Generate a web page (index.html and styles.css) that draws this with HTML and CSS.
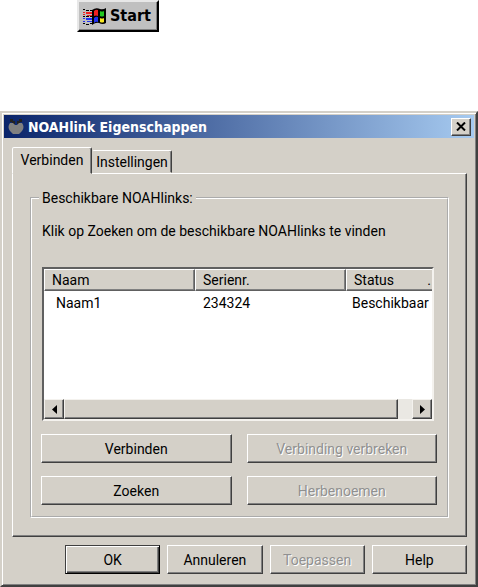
FILE: index.html
```html
<!DOCTYPE html>
<html lang="nl">
<head>
    <meta charset="UTF-8">
    <meta name="viewport" content="width=device-width, initial-scale=1.0">
    <title>NOAHlink Eigenschappen</title>
    <link rel="stylesheet" href="styles.css">
</head>
<body>
    <div class="taskbar">
        <button type="button" class="start-btn">
            <svg class="start-logo" width="25" height="19" viewBox="0 0 25 19" aria-hidden="true">
                <path fill="#000" d="M10 3Q14 0 18 2Q21 3 24 1V16Q21 18 17 16Q14 15 10 18Z"/>
                <path fill="#f02020" d="M12 4Q14 2 16 3V9Q14 8 12 9Z"/>
                <path fill="#20c820" d="M18 4Q20 5 22 4V9Q20 10 18 9Z"/>
                <path fill="#2030f0" d="M12 11Q14 9 16 10V15Q14 14 12 16Z"/>
                <path fill="#f8e820" d="M18 11Q20 12 22 11V15Q20 16 18 15Z"/>
                <path fill="#000" d="M1 2h2v1H1zM4 3h3v1H4zM8 3h2v1H8zM1 9h2v1H1zM4 9h3v1H4zM8 9h2v1H8zM1 16h2v1H1zM4 17h3v1H4zM8 16h2v1H8z"/>
                <path fill="#f02020" d="M1 5h2v1H1zM4 5h6v2H4zM1 7h2v1H1zM5 8h5v1H5z"/>
                <path fill="#2030f0" d="M1 11h2v1H1zM4 11h6v2H4zM1 14h2v1H1zM5 14h5v1H5z"/>
            </svg>
            Start
        </button>
    </div>

    <main class="dialog">
        <header class="title-bar">
            <svg class="title-icon" width="16" height="18" viewBox="0 0 16 18" aria-hidden="true">
                <path fill="#222" d="M2 1h3v2h2v3H4V4H2zM14 1h-3v2H9v3h3V4h2z"/>
                <path fill="#808080" d="M2 5H5L7 7H9L11 5H14Q17 9 14 13L11 16H5L2 13Q-1 9 2 5Z"/>
            </svg>
            <h1>NOAHlink Eigenschappen</h1>
            <button type="button" class="close-btn" aria-label="Sluiten">
                <svg width="10" height="9" viewBox="0 0 10 9" aria-hidden="true">
                    <path d="M1 0.5L9 8.5M9 0.5L1 8.5" stroke="#000" stroke-width="2"/>
                </svg>
            </button>
        </header>

        <div class="dialog-body">
            <div class="tabs" role="tablist">
                <button type="button" class="tab active" role="tab" aria-selected="true">Verbinden</button>
                <button type="button" class="tab" role="tab" aria-selected="false">Instellingen</button>
            </div>

            <div class="panel" role="tabpanel">
                <fieldset class="group">
                    <legend>Beschikbare NOAHlinks:</legend>
                    <p class="hint">Klik op Zoeken om de beschikbare NOAHlinks te vinden</p>

                    <div class="list">
                        <table>
                            <thead>
                                <tr>
                                    <th>Naam</th>
                                    <th>Serienr.</th>
                                    <th class="status"><span>Status</span><span>.</span></th>
                                </tr>
                            </thead>
                            <tbody>
                                <tr>
                                    <td class="name">Naam1</td>
                                    <td>234324</td>
                                    <td>Beschikbaar</td>
                                </tr>
                            </tbody>
                        </table>
                        <div class="scrollbar">
                            <button type="button" class="scroll-btn" aria-label="Naar links">
                                <svg width="5" height="9" viewBox="0 0 5 9" aria-hidden="true"><path d="M5 0V9L0 4.5Z"/></svg>
                            </button>
                            <div class="scroll-thumb"></div>
                            <div class="scroll-track"></div>
                            <button type="button" class="scroll-btn" aria-label="Naar rechts">
                                <svg width="5" height="9" viewBox="0 0 5 9" aria-hidden="true"><path d="M0 0V9L5 4.5Z"/></svg>
                            </button>
                        </div>
                    </div>

                    <div class="actions">
                        <button type="button" class="btn">Verbinden</button>
                        <button type="button" class="btn" disabled>Verbinding verbreken</button>
                        <button type="button" class="btn">Zoeken</button>
                        <button type="button" class="btn" disabled>Herbenoemen</button>
                    </div>
                </fieldset>
            </div>

            <footer class="dialog-buttons">
                <button type="button" class="btn default">OK</button>
                <button type="button" class="btn">Annuleren</button>
                <button type="button" class="btn" disabled>Toepassen</button>
                <button type="button" class="btn">Help</button>
            </footer>
        </div>
    </main>
</body>
</html>
```
FILE: styles.css
```css
* {
    box-sizing: border-box;
}
body {
    margin: 0;
    background-color: #fff;
    font-family: Roboto, "Liberation Sans", Arial, sans-serif;
    font-size: 14px;
    line-height: 16px;
    color: #000;
}
button {
    margin: 0;
    padding: 0;
    font: inherit;
    color: inherit;
    background-color: #d4d0c8;
    border: none;
}
svg {
    flex-shrink: 0;
}

/* Start button */
.taskbar {
    height: 111px;
    padding-left: 77px;
}
.start-btn {
    display: flex;
    align-items: center;
    gap: 3px;
    width: 82px;
    height: 32px;
    padding-left: 3px;
    font-family: "DejaVu Sans Condensed", "DejaVu Sans", sans-serif;
    font-size: 16px;
    font-weight: bold;
    background-color: #c0c0c0;
    border: 2px solid;
    border-color: #e8e8e8 #000 #000 #e8e8e8;
    box-shadow: inset -1px -1px #808080;
}

/* Dialog window */
.dialog {
    padding: 2px;
    background-color: #d4d0c8;
    border: 2px solid;
    border-color: #d4d0c8 #404040 #404040 #d4d0c8;
    box-shadow: inset 1px 1px #fff, inset -1px -1px #808080;
}
.title-bar {
    display: flex;
    align-items: center;
    gap: 4px;
    height: 23px;
    padding: 0 3px 0 4px;
    background: linear-gradient(to right, #0a246a, #a6caf0);
}
.title-bar h1 {
    flex: 1;
    margin: 0;
    font-family: "DejaVu Sans Condensed", "DejaVu Sans", sans-serif;
    font-size: 14px;
    font-weight: bold;
    color: #fff;
}
.close-btn {
    display: flex;
    align-items: center;
    justify-content: center;
    width: 20px;
    height: 18px;
    border: 1px solid;
    border-color: #fff #404040 #404040 #fff;
    box-shadow: inset -1px -1px #808080;
}
.dialog-body {
    padding: 9px 7px 9px 8px;
}

/* Tabs */
.tabs {
    display: flex;
    align-items: flex-end;
}
.tab {
    width: 80px;
    height: 23px;
    border: 1px solid;
    border-color: #fff #404040 transparent transparent;
    border-radius: 2px 2px 0 0;
    box-shadow: inset -1px 0 #808080;
}
.tab.active {
    height: 27px;
    margin-bottom: -1px;
    padding-bottom: 2px;
    border-left-color: #fff;
    z-index: 1;
}
.panel {
    padding: 16px 17px 18px;
    border: 1px solid;
    border-color: #fff #404040 #404040 #fff;
    box-shadow: inset -1px -1px #808080;
}

/* Group box */
.group {
    min-width: 0;
    margin: 0;
    padding: 0 10px 11px 9px;
    border: 2px groove #fff;
}
.group legend {
    margin-left: -2px;
    padding: 0 3px;
}
.hint {
    margin: 17px 1px 28px;
}

/* List of links */
.list {
    display: flex;
    flex-direction: column;
    height: 154px;
    margin: 0 3px 0 1px;
    background-color: #fff;
    border: 2px solid;
    border-color: #606060 #f4f2ee #f4f2ee #606060;
}
.list table {
    width: 100%;
    table-layout: fixed;
    border-collapse: separate;
    border-spacing: 0;
}
th {
    width: 151px;
    height: 22px;
    padding: 0 7px;
    font-weight: normal;
    text-align: left;
    background-color: #d4d0c8;
    border: 1px solid;
    border-color: #fff #606060 #606060 #fff;
    box-shadow: inset -1px -1px #808080;
}
.status {
    display: flex;
    align-items: center;
    justify-content: space-between;
    width: auto;
    padding: 0 1px 0 7px;
    border-right: none;
    box-shadow: inset 0 -1px #808080;
}
td {
    height: 24px;
    padding: 0 0 0 8px;
}
td.name {
    padding-left: 12px;
}
td:last-child {
    padding-left: 6px;
}
.scrollbar {
    display: flex;
    height: 20px;
    margin-top: auto;
}
.scroll-btn {
    display: flex;
    align-items: center;
    justify-content: center;
    width: 20px;
}
.scroll-thumb {
    flex: 1;
    background-color: #d4d0c8;
}
.scroll-btn,
.scroll-thumb {
    border: 1px solid;
    border-color: #f4f2ee #404040 #404040 #f4f2ee;
    box-shadow: inset -1px -1px #808080;
}
.scroll-track {
    width: 14px;
    background-color: #eae8e3;
}

/* Buttons */
.btn {
    height: 29px;
    border: 1px solid;
    border-color: #fff #404040 #404040 #fff;
    box-shadow: inset -1px -1px #808080;
}
.btn:disabled {
    color: #909090;
    text-shadow: 1px 1px #fff;
}
.btn.default {
    border-color: #404040 #000 #000 #404040;
    box-shadow: inset 1px 1px #fff, inset -1px -1px #404040, inset -2px -2px #808080;
}
.actions {
    display: grid;
    grid-template-columns: 1fr 1fr;
    gap: 13px 15px;
    margin-top: 13px;
}
.dialog-buttons {
    display: grid;
    grid-template-columns: repeat(4, 1fr);
    gap: 7px;
    margin-top: 8px;
    padding-left: 53px;
}
```
